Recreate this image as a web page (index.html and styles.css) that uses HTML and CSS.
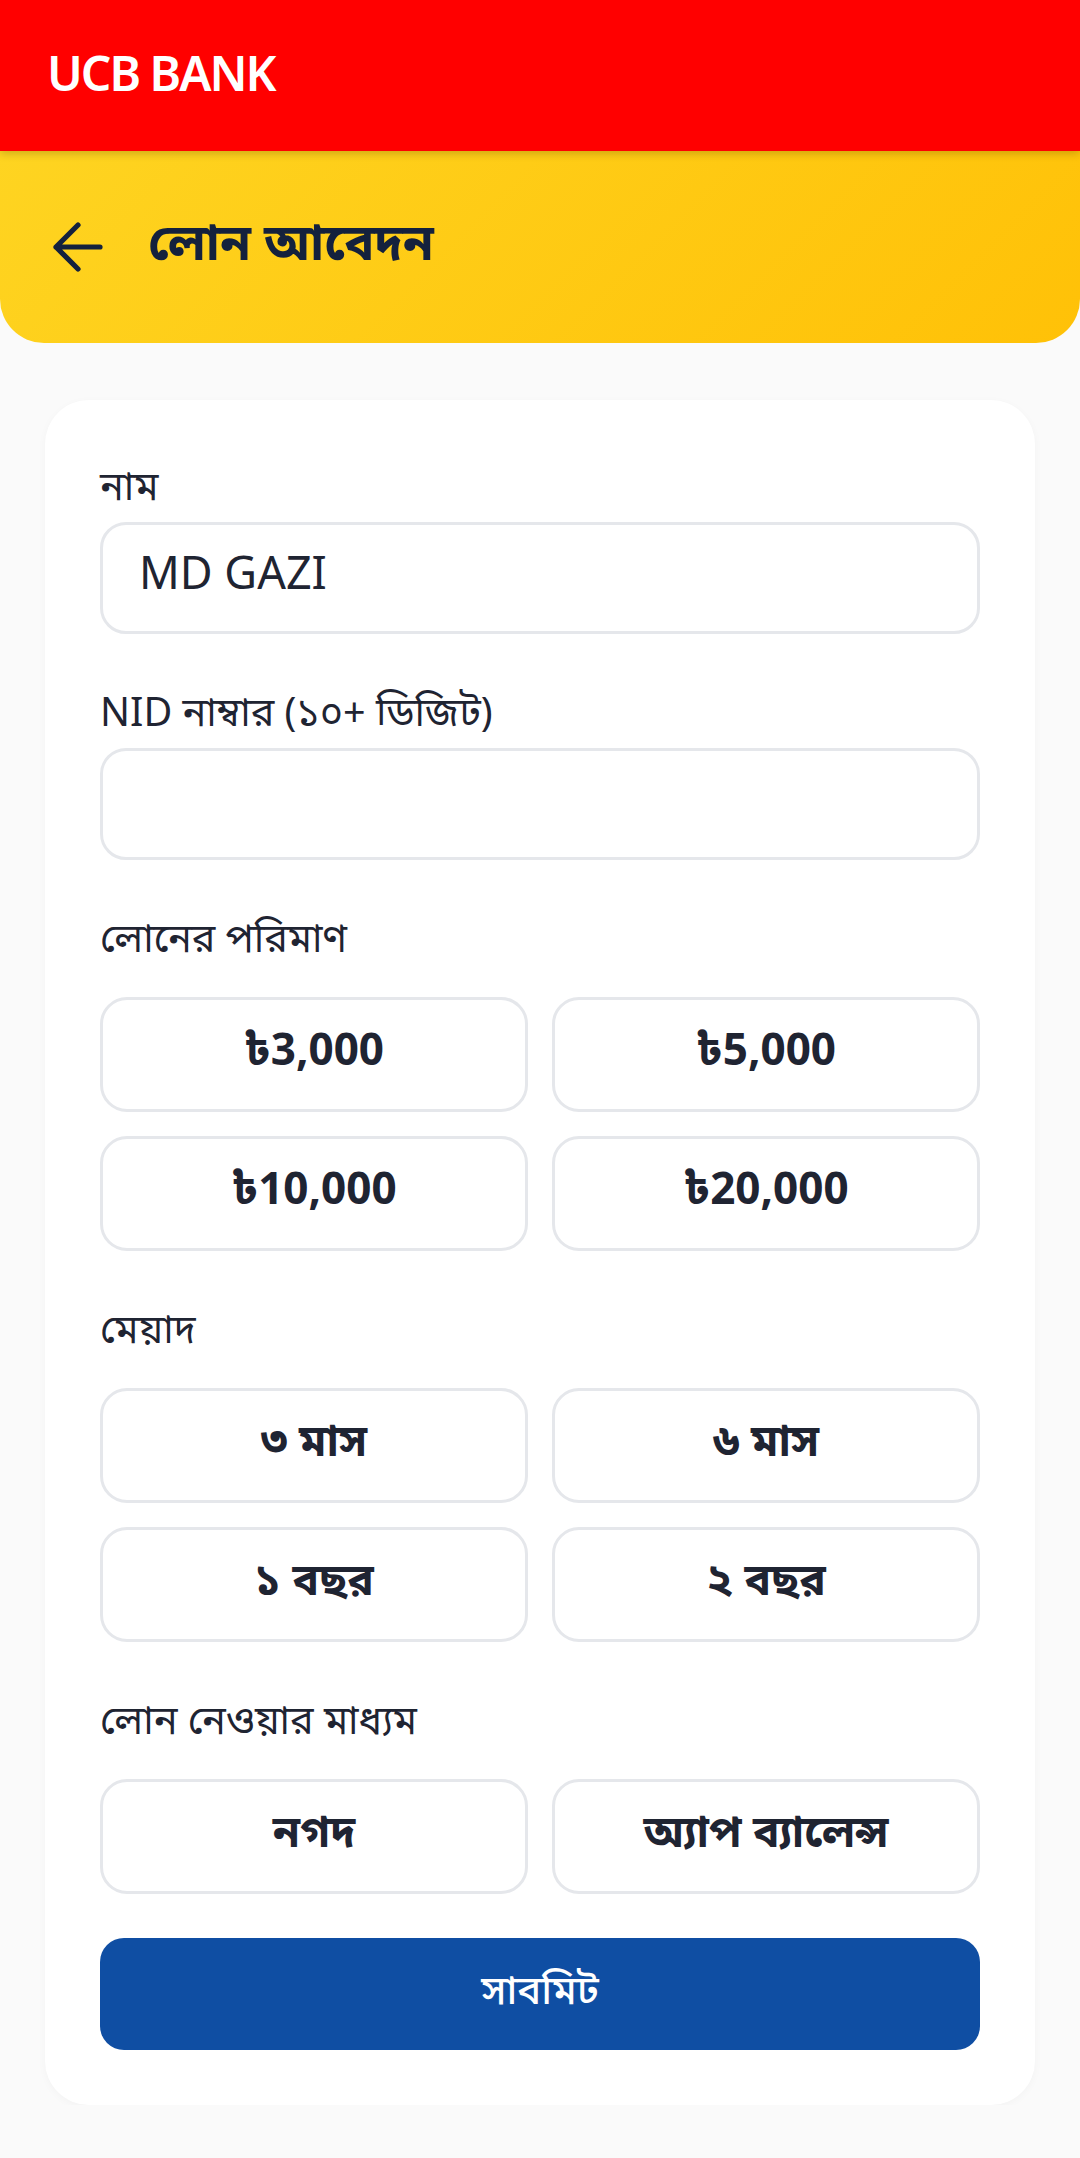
FILE: index.html
```html
<!DOCTYPE html>
<html lang="bn">
<head>
  <meta charset="UTF-8">
  <title>লোন আবেদন - UCB BANK</title>
  <link rel="stylesheet" href="styles.css">
</head>
<body>

  <header class="topbar">UCB BANK</header>

  <div class="pagehead">
    <button class="back" aria-label="ফিরে যান">
      <svg viewBox="0 0 24 24" width="66" height="66">
        <path d="M20 12H4M12 4L4 12l8 8" fill="none" stroke="currentColor" stroke-width="1.9" stroke-linecap="round" stroke-linejoin="round"/>
      </svg>
    </button>
    <h1>লোন আবেদন</h1>
  </div>

  <main class="card">
    <div class="field">
      <label for="name">নাম</label>
      <input type="text" id="name" class="textbox" value="MD GAZI" />
    </div>

    <div class="field">
      <label for="nid">NID নাম্বার (১০+ ডিজিট)</label>
      <input type="text" id="nid" class="textbox" />
    </div>

    <div class="field">
      <label>লোনের পরিমাণ</label>
      <div class="options">
        <button class="option">৳3,000</button>
        <button class="option">৳5,000</button>
        <button class="option">৳10,000</button>
        <button class="option">৳20,000</button>
      </div>
    </div>

    <div class="field">
      <label>মেয়াদ</label>
      <div class="options">
        <button class="option">৩ মাস</button>
        <button class="option">৬ মাস</button>
        <button class="option">১ বছর</button>
        <button class="option">২ বছর</button>
      </div>
    </div>

    <div class="field">
      <label>লোন নেওয়ার মাধ্যম</label>
      <div class="options">
        <button class="option">নগদ</button>
        <button class="option">অ্যাপ ব্যালেন্স</button>
      </div>
    </div>

    <button class="submit">সাবমিট</button>
  </main>

</body>
</html>
```

FILE: styles.css
```css
body {
  font-family: 'Noto Sans', 'Noto Sans Bengali', sans-serif;
  background-color: #fafafa;
  color: #1f2432;
  margin: 0;
  padding: 0;
}

.topbar {
  position: relative;
  z-index: 1;
  box-sizing: border-box;
  height: 151px;
  display: flex;
  align-items: center;
  padding: 0 0 6px 47px;
  background-color: #ff0000;
  color: white;
  font-size: 48px;
  font-weight: 600;
  letter-spacing: -2px;
  box-shadow: 0 3px 8px rgba(0,0,0,0.18);
}

.pagehead {
  height: 192px;
  display: flex;
  align-items: center;
  padding-left: 45px;
  gap: 37px;
  background: linear-gradient(135deg, #fed421, #ffc107);
  border-radius: 0 0 44px 44px;
}

.back {
  width: 66px;
  height: 66px;
  padding: 0;
  border: none;
  background: none;
  color: #14213d;
  display: flex;
}

.pagehead h1 {
  margin: 0 0 8px;
  font-size: 50px;
  font-weight: bold;
  color: #14213d;
}

.card {
  display: block;
  margin: 57px 45px 0;
  background-color: white;
  padding: 58px 55px 55px;
  border-radius: 44px;
  box-shadow: 0 2px 8px rgba(0,0,0,0.03);
}

.field {
  margin-bottom: 50px;
}

.field:last-of-type {
  margin-bottom: 44px;
}

label {
  display: block;
  font-size: 39.5px;
  line-height: 54px;
  margin-bottom: 10px;
  color: #1f2432;
}

.textbox {
  box-sizing: border-box;
  width: 100%;
  height: 112px;
  padding: 0 36px 14px;
  border: 3px solid #e5e7eb;
  border-radius: 26px;
  font-family: inherit;
  font-size: 45px;
  color: #1f2432;
  background: white;
  outline: none;
}

.options {
  display: grid;
  grid-template-columns: 1fr 1fr;
  gap: 24px;
  margin-top: 33px;
}

.option {
  height: 115px;
  padding: 0 0 8px;
  border: 3px solid #e5e7eb;
  border-radius: 27px;
  background: white;
  font-family: inherit;
  font-size: 44px;
  font-weight: bold;
  color: #1f2432;
  cursor: pointer;
}

.submit {
  display: block;
  width: 100%;
  height: 112px;
  padding: 0 0 8px;
  border: none;
  border-radius: 24px;
  background-color: #0f4ea3;
  color: white;
  font-family: inherit;
  font-size: 40px;
  font-weight: 500;
  cursor: pointer;
}
```
